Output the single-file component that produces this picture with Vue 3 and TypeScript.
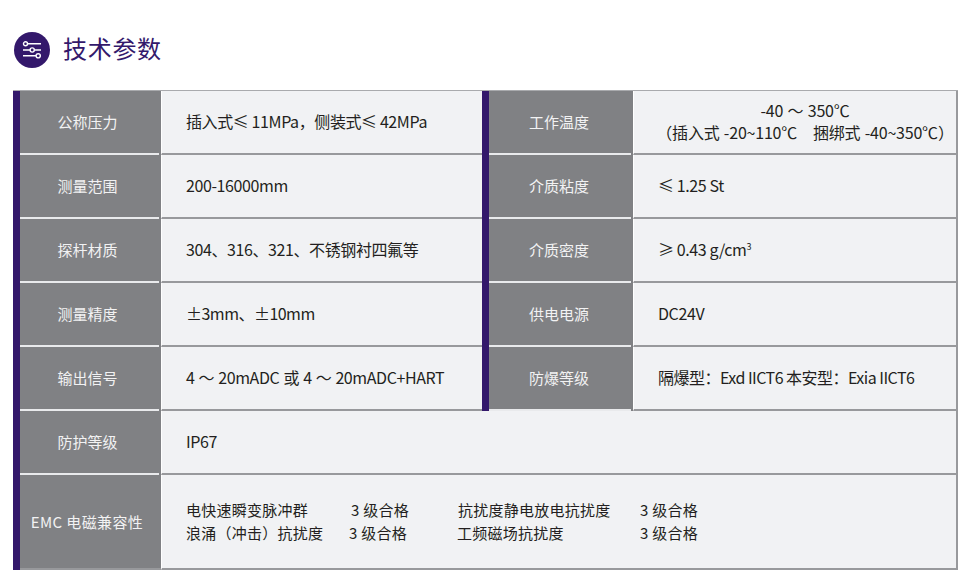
<script setup lang="ts">
interface Row { label: string; value: string; label2?: string; value2?: string; wideWords?: boolean; tight?: boolean; narrow?: boolean }
const rows: Row[] = [
  { label: '测量范围', value: '200-16000mm', label2: '介质粘度', value2: '≤ 1.25 St' },
]
const mid: Row[] = [
  { label: '测量精度', value: '±3mm、±10mm', label2: '供电电源', value2: 'DC24V', narrow: true },
  { label: '输出信号', value: '4 ～ 20mADC 或 4 ～ 20mADC+HART', label2: '防爆等级', value2: '隔爆型：Exd IICT6 本安型：Exia IICT6', wideWords: true, tight: true },
]
</script>

<template>
  <main class="page">
    <header class="head">
      <span class="badge">
        <svg width="20" height="18" viewBox="0 0 20 18" fill="none" stroke="#fff" stroke-width="1.4">
          <path d="M5.5 2.8H19M1 9H8M12.5 9H19M1 14.8H14M18.5 14.8H19" />
          <circle cx="3.5" cy="2.8" r="2" />
          <circle cx="10.2" cy="9" r="2.1" />
          <circle cx="16.2" cy="14.8" r="2.1" />
        </svg>
      </span>
      <h1>技术参数</h1>
    </header>

    <section class="table">
      <div class="label first">公称压力</div>
      <div class="value">插入式≤ 11MPa，侧装式≤ 42MPa</div>
      <div class="label">工作温度</div>
      <div class="value last temp">
        <div>-40 ～ 350℃</div>
        <div>（插入式 -20~110℃　捆绑式 -40~350℃）</div>
      </div>

      <template v-for="r in rows" :key="r.label">
        <div class="label first">{{ r.label }}</div>
        <div class="value">{{ r.value }}</div>
        <div class="label">{{ r.label2 }}</div>
        <div class="value last">{{ r.value2 }}</div>
      </template>

      <div class="label first">探杆材质</div>
      <div class="value">304、316、321、不锈钢衬四氟等</div>
      <div class="label">介质密度</div>
      <div class="value last"><span>≥ 0.43 g/cm<sup>3</sup></span></div>

      <template v-for="r in mid" :key="r.label">
        <div class="label first">{{ r.label }}</div>
        <div class="value" :class="{ spaced: r.wideWords, tight: r.narrow }">{{ r.value }}</div>
        <div class="label">{{ r.label2 }}</div>
        <div class="value last" :class="{ tight: r.tight }">{{ r.value2 }}</div>
      </template>

      <div class="label first">防护等级</div>
      <div class="value last wide">IP67</div>

      <div class="label first tall">EMC 电磁兼容性</div>
      <div class="value last wide emc">
        <span>电快速瞬变脉冲群</span><span>3 级合格</span><span>抗扰度静电放电抗扰度</span><span>3 级合格</span>
        <span>浪涌（冲击）抗扰度</span><span class="s">3 级合格</span><span class="s">工频磁场抗扰度</span><span>3 级合格</span>
      </div>
    </section>
  </main>
</template>

<style scoped>
.page {
  width: 976px;
  height: 584px;
  padding: 32px 18px 0 13px;
  box-sizing: border-box;
  background: #fff;
  overflow: hidden;
  font-family: "Noto Sans CJK SC", "Noto Sans", sans-serif;
}
.head {
  display: flex;
  align-items: center;
  gap: 13px;
  height: 36px;
  margin-left: 1px;
}
.badge {
  width: 36px;
  height: 36px;
  border-radius: 50%;
  background: #33186b;
  display: flex;
  align-items: center;
  justify-content: center;
}
h1 {
  margin: -4px 0 0 0;
  font-size: 24px;
  font-weight: 400;
  line-height: 36px;
  letter-spacing: 0.7px;
  color: #33186b;
}
.table {
  margin-top: 22px;
  display: grid;
  grid-template-columns: 148px 321px 151px 325px;
  grid-template-rows: repeat(6, 64px) 95px;
  border-top: 1px solid #a9aaad;
  background: #f1f2f4;
}
.label {
  background:
    linear-gradient(#33186b, #33186b) 0 0 / 7px 100% no-repeat,
    linear-gradient(#e9eaec, #e9eaec) 0 100% / calc(100% - 2px) 2px no-repeat,
    #808184;
  color: #f2f2f3;
  padding: 0 4px 4px 7px;
  box-sizing: border-box;
  display: flex;
  align-items: center;
  justify-content: center;
  font-size: 15px;
}
.first {
  padding-right: 6px;
}
.value {
  display: flex;
  align-items: center;
  padding: 0 0 2px 24px;
  border-left: 1px solid #fff;
  border-bottom: 2px solid #98999c;
  background: #f1f2f4;
  color: #231f20;
  font-size: 16px;
  letter-spacing: -0.4px;
  white-space: nowrap;
}
.spaced {
  word-spacing: 0.9px;
}
.tight {
  letter-spacing: -0.52px;
}
.last {
  border-right: 2px solid #98999c;
}
.temp {
  flex-direction: column;
  justify-content: center;
  padding-left: 20px;
  line-height: 22px;
  letter-spacing: -0.2px;
  word-spacing: 1px;
}
.wide {
  grid-column: 2 / 5;
}
.tall {
  padding-right: 7px;
  padding-bottom: 2px;
  letter-spacing: 0.4px;
  background:
    linear-gradient(#33186b, #33186b) 0 0 / 7px 100% no-repeat,
    linear-gradient(#98999c, #98999c) 0 100% / 100% 2px no-repeat,
    #808184;
}
.emc {
  display: grid;
  grid-template-columns: 164px 108px 181px 1fr;
  grid-auto-rows: 23px;
  align-content: center;
  align-items: center;
  padding-left: 24px;
  font-size: 15px;
  letter-spacing: 0.25px;
}
.emc span:nth-child(4n + 2) {
  margin-left: 1px;
}
.emc span:nth-child(4n + 4) {
  margin-left: 1px;
}
.s {
  margin-left: -1px;
}
.emc span.s:nth-child(6) {
  margin-left: -1px;
}
sup {
  font-size: 9px;
  line-height: 0;
}
</style>

<style>
html, body { margin: 0; background: #fff; }
</style>
